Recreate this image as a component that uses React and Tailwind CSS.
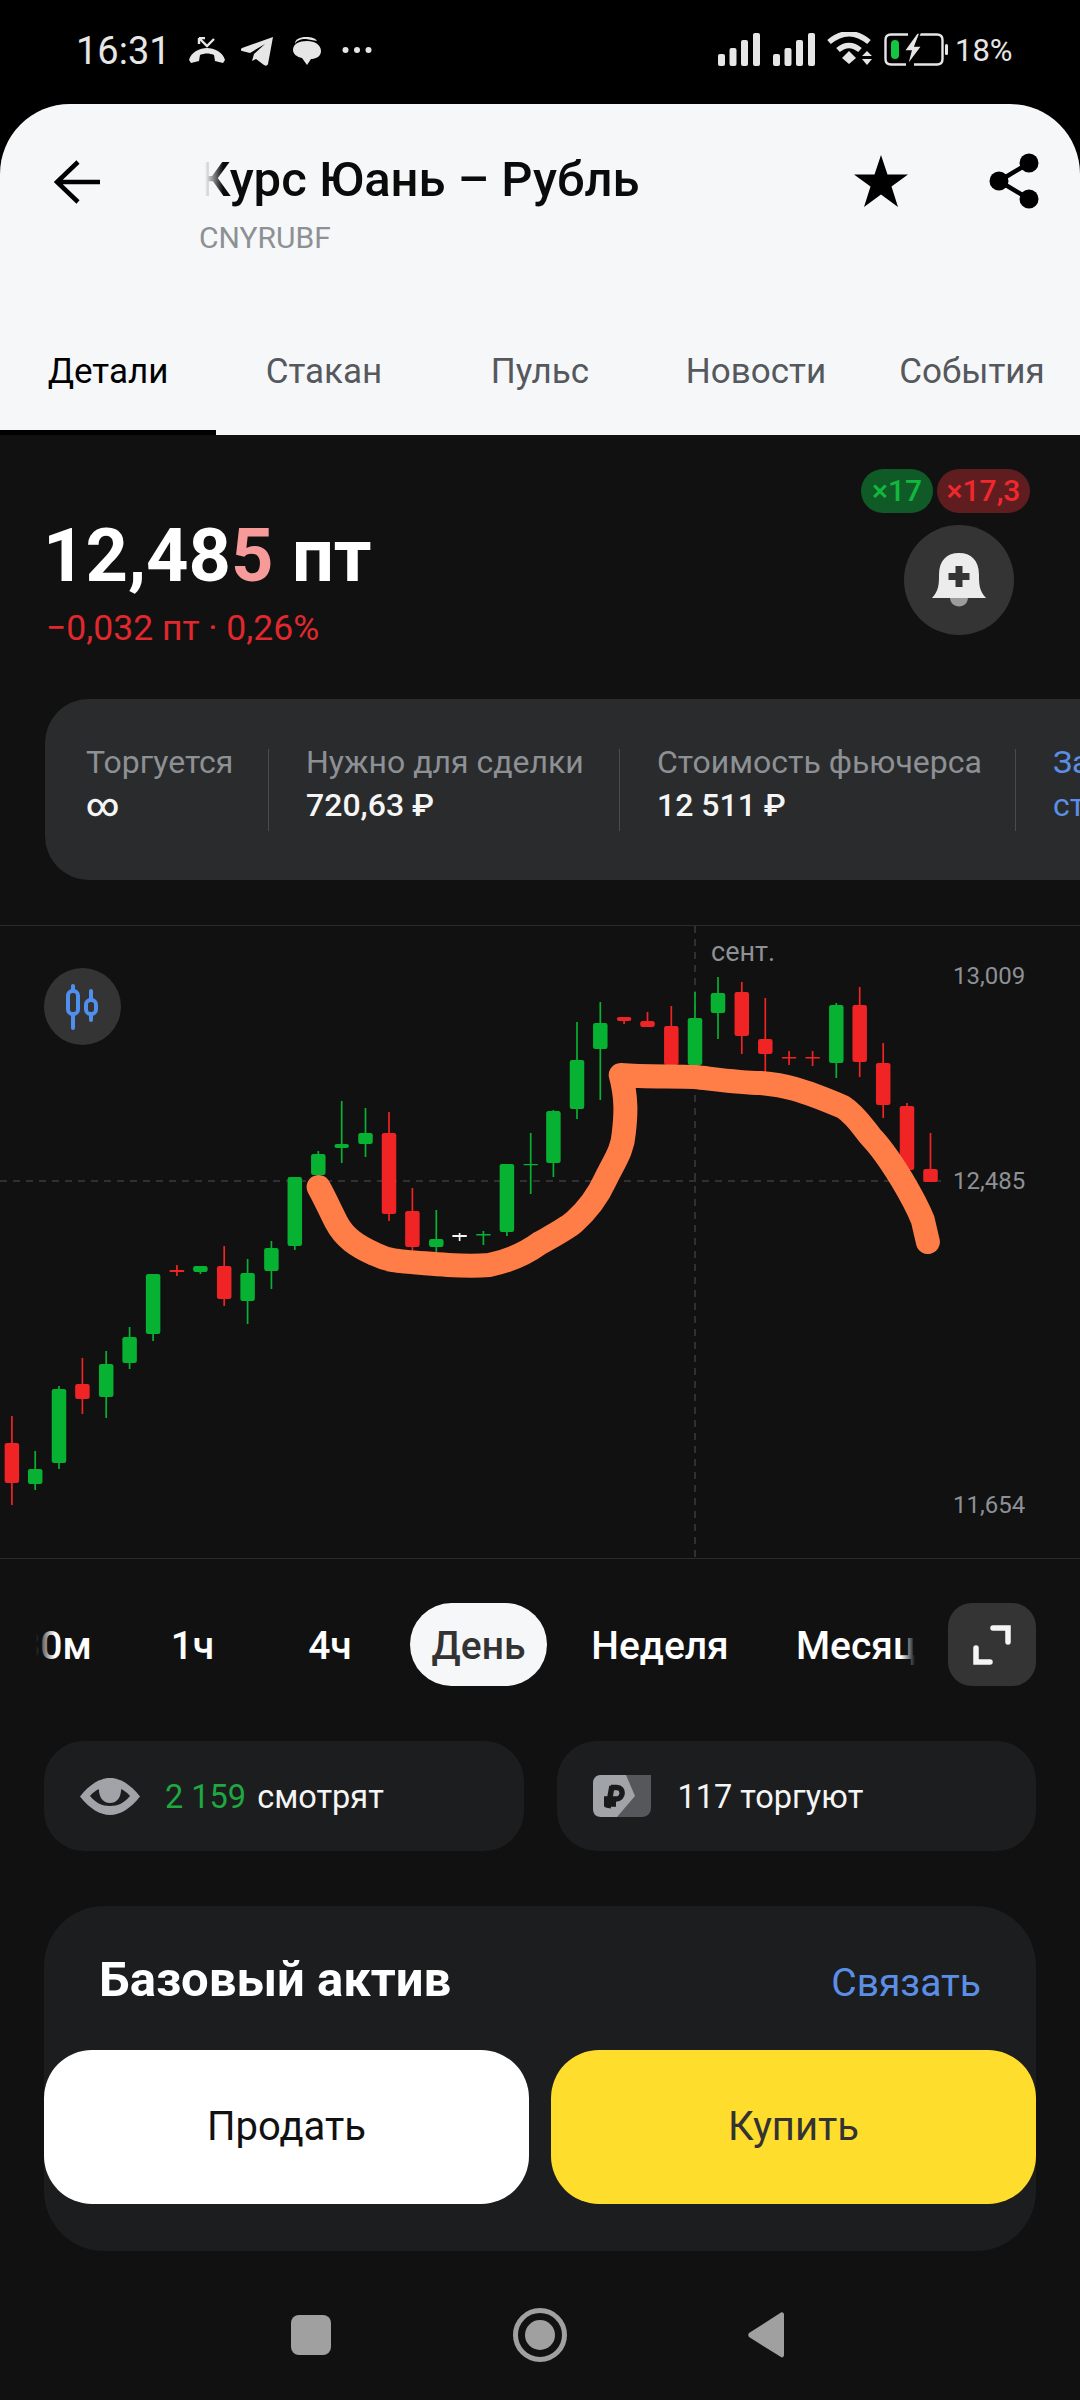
const FONT = { fontFamily: 'Roboto, "Noto Sans", sans-serif' };

const G = '#07b232';
const R = '#f02424';
const W = '#f5f5f5';
// x, wickTop, wickBottom, bodyTop, bodyBottom, colour
const candles = [
  [11.9, 1416, 1505, 1443, 1483, R],
  [35.2, 1451, 1490, 1469, 1484, G],
  [59, 1386, 1469, 1389, 1463, G],
  [82.4, 1358, 1414, 1384, 1399, R],
  [106.2, 1351, 1418, 1364, 1397, G],
  [129.6, 1327, 1369, 1337, 1363, G],
  [153.1, 1274, 1341, 1274, 1334, G],
  [176.9, 1265, 1276, 1270, 1272, R],
  [200.4, 1266, 1274, 1266, 1272, G],
  [224.2, 1246, 1306, 1266, 1299, R],
  [247.6, 1259, 1324, 1273, 1301, G],
  [271.4, 1241, 1289, 1248, 1271, G],
  [294.8, 1177, 1250, 1177, 1246, G],
  [318.3, 1151, 1177, 1154, 1175, G],
  [341.7, 1101, 1163, 1144, 1148, G],
  [365.5, 1108, 1157, 1133, 1144, G],
  [389, 1112, 1221, 1133, 1214, R],
  [412.4, 1188, 1253, 1211, 1247, R],
  [436.3, 1210, 1255, 1239, 1247, G],
  [459.6, 1233, 1241, 1235, 1237, W],
  [483.4, 1231, 1245, 1234, 1235.5, G],
  [506.9, 1164, 1236, 1164, 1232, G],
  [530.7, 1133, 1194, 1164, 1165, G],
  [553.4, 1110, 1177, 1111, 1163, G],
  [577, 1022, 1119, 1060, 1109, G],
  [600.3, 1002, 1100, 1023, 1049, G],
  [624.1, 1017, 1024, 1017, 1021, R],
  [647.5, 1012, 1027, 1021, 1027, R],
  [671.3, 1006, 1067, 1026, 1065, R],
  [695, 992, 1067, 1018, 1065, G],
  [718, 977, 1039, 993, 1013, G],
  [741.8, 982, 1054, 992, 1036, R],
  [765.3, 998, 1077, 1039, 1054, R],
  [789.1, 1051, 1065, 1057, 1058.5, R],
  [812.6, 1051, 1066, 1057, 1058.5, R],
  [836.3, 1003, 1078, 1005, 1063, G],
  [859.7, 987, 1077, 1005, 1062, R],
  [883.2, 1043, 1118, 1063, 1105, R],
  [907, 1103, 1170, 1106, 1170, R],
  [930.5, 1133, 1182, 1169, 1182, R],
];

const strokePath =
  'M318.6 1187 C324.8 1198 330 1210 336.2 1222 C344.5 1238 356.9 1246 374.5 1254 C391 1262 397.2 1261 447.9 1265 C465.5 1266 479 1266 489.3 1265 C509 1261 527.6 1252 540 1243 C552.4 1236 565.9 1229 574.1 1222 C589.7 1208 597.9 1196 605.2 1180 C614.5 1161 622.8 1150 623.8 1133 C625.9 1115 626.9 1098 620.7 1075 C643.5 1077 674.5 1076 695.2 1077 C721 1080 741.7 1083 760.4 1083 C783.1 1085 798.6 1088 843.1 1107 C855.5 1115 862.8 1127 871 1137 C884.5 1151 892.8 1165 902.1 1180 C910.4 1194 917.6 1207 922.8 1220 L927.9 1242';

function Chart() {
  return (
    <svg viewBox="0 926 1080 632" className="block h-full w-full">
      <line x1="695" y1="926" x2="695" y2="1558" stroke="#3a3b3c" strokeWidth="1.5" strokeDasharray="7 6" />
      <line x1="0" y1="1181" x2="941" y2="1181" stroke="#3a3b3c" strokeWidth="1.5" strokeDasharray="7 6" />
      {candles.map(([x, wt, wb, bt, bb, c], i) => {
        const thin = bb - bt < 3;
        return (
          <g key={i}>
            <line x1={x} y1={wt} x2={x} y2={wb} stroke={c} strokeWidth="1.7" />
            <rect x={x - 7.25} y={bt} width="14.5" height={Math.max(bb - bt, 1.2)} rx={thin ? 0.6 : 2.2} fill={c} />
          </g>
        );
      })}
      <path d={strokePath} fill="none" stroke="#ff7d47" strokeWidth="24" strokeLinecap="round" strokeLinejoin="round" />
    </svg>
  );
}

function StatusBar() {
  return (
    <div className="flex h-[104px] items-start bg-black pt-[31px] text-[#e6e6e6]">
      <span className="ml-[76px] text-[38px] leading-[40px]">16:31</span>
      <svg viewBox="0 0 36 27" className="ml-[18px] mt-[6px] h-[27px] w-[36px]" fill="#e6e6e6">
        <path d="M0 23 C2 15 11 11 18 11 C25 11 34 15 36 23 L34 26 L26 24 L25 18 C20 16 16 16 11 18 L10 24 L2 26 Z" />
        <path d="M10 1 H16 M10 1 V7 M10 1 L18 9 L25 2" fill="none" stroke="#e6e6e6" strokeWidth="2.4" />
      </svg>
      <svg viewBox="0 0 33 29" className="ml-[16px] mt-[6px] h-[29px] w-[33px]" fill="#e6e6e6">
        <path d="M32 0 L27 27 C26 29 25 29 23 28 L15 22 L11 24 L13 17 L24 7 L9 16 L1 14 C-1 13 0 12 1 11 Z" />
      </svg>
      <svg viewBox="0 0 28 28" className="ml-[19px] mt-[6px] h-[28px] w-[28px]" fill="#e6e6e6">
        <path d="M2 7 C2 2 7 0 13 0 C19 0 22 1 24 4 L13 2 C7 2 3 4 2 7Z" />
        <path d="M14 4 C22 4 28 8 28 14 C28 20 22 22 18 22 L14 28 L9 21 C4 20 0 17 0 13 C0 7 6 4 14 4Z" />
      </svg>
      <svg viewBox="0 0 30 8" className="ml-[21px] mt-[15px] h-[8px] w-[30px]" fill="#e6e6e6">
        <circle cx="3.5" cy="4" r="3" />
        <circle cx="15" cy="4" r="3" />
        <circle cx="26.5" cy="4" r="3" />
      </svg>
      <div className="flex-1" />
      <svg viewBox="0 0 42 33" className="mt-[2px] h-[33px] w-[42px]" fill="#e6e6e6">
        <rect x="0" y="21" width="7" height="12" rx="2" />
        <rect x="11.5" y="15" width="7" height="18" rx="2" />
        <rect x="23" y="7" width="7" height="26" rx="2" />
        <rect x="35" y="0" width="7" height="33" rx="2" />
      </svg>
      <svg viewBox="0 0 42 33" className="ml-[13px] mt-[2px] h-[33px] w-[42px]" fill="#e6e6e6">
        <rect x="0" y="21" width="7" height="12" rx="2" />
        <rect x="11.5" y="15" width="7" height="18" rx="2" />
        <rect x="23" y="7" width="7" height="26" rx="2" />
        <rect x="35" y="0" width="7" height="33" rx="2" />
      </svg>
      <svg viewBox="0 0 46 34" className="ml-[12px] mt-[1px] h-[34px] w-[46px]" fill="none" stroke="#e6e6e6">
        <path d="M2 10 C15 -1 29 -1 42 10" strokeWidth="5.5" />
        <path d="M11 18 C18 12 26 12 33 18" strokeWidth="5.5" />
        <path d="M15 26 L22 19 L29 26 L22 32 Z" fill="#e6e6e6" stroke="none" />
        <path d="M35 24 L40 19 L45 24 Z M35 27 L45 27 L40 33 Z" fill="#e6e6e6" stroke="none" />
      </svg>
      <svg viewBox="0 0 64 33" className="ml-[11px] mt-[2px] h-[33px] w-[64px]" fill="none">
        <path d="M24 1.5 H7 C3.5 1.5 1.5 3.5 1.5 7 V26 C1.5 29.5 3.5 31.5 7 31.5 H22 M34 1.5 H53 C56.5 1.5 58.5 3.5 58.5 7 V26 C58.5 29.5 56.5 31.5 53 31.5 H30" stroke="#e6e6e6" strokeWidth="2.4" />
        <rect x="61" y="11" width="3" height="11" rx="1.5" fill="#e6e6e6" />
        <rect x="7" y="7" width="8" height="19" rx="4" fill="#12c63f" />
        <path d="M33 0 L20 18 H27 L23 33 L38 13 H31 L36 0 Z" fill="#e6e6e6" stroke="#000" strokeWidth="1.5" />
      </svg>
      <span className="ml-[7px] w-[57px] text-[31px] leading-[40px]">18%</span>
      <div className="w-[68px]" />
    </div>
  );
}

function Header() {
  return (
    <div className="rounded-t-[70px] bg-[#f6f7f8]">
      <div className="flex h-[146px] items-start">
        <svg viewBox="0 0 46 44" className="ml-[54px] mt-[56px] h-[44px] w-[46px]" fill="none" stroke="#000" strokeWidth="4.5">
          <path d="M24 2 L3 22 L24 42 M3 22 H46" />
        </svg>
        <div className="relative ml-[99px] mt-[45px]">
          <div className="text-[49px] font-medium leading-[62px] text-[#0b0b0b]">Курс Юань – Рубль</div>
          <div className="mt-[10px] text-[30px] leading-[34px] text-[#8d9095]">CNYRUBF</div>
          <div className="absolute left-0 top-0 h-[62px] w-[24px] bg-gradient-to-r from-[#f6f7f8] from-25% to-transparent" />
        </div>
        <div className="flex-1" />
        <svg viewBox="0 0 54 52" className="mt-[51px] h-[52px] w-[54px]" fill="#000">
          <path d="M27 0 L33.5 19.5 H54 L37.5 31.5 L44 52 L27 39.5 L10 52 L16.5 31.5 L0 19.5 H20.5 Z" />
        </svg>
        <svg viewBox="0 0 50 56" className="ml-[81px] mr-[41px] mt-[49px] h-[56px] w-[50px]" fill="#000">
          <circle cx="40" cy="10" r="9.5" />
          <circle cx="10" cy="28" r="9.5" />
          <circle cx="40" cy="46" r="9.5" />
          <path d="M40 10 L10 28 L40 46" fill="none" stroke="#000" strokeWidth="4.5" />
        </svg>
      </div>
      <div className="flex h-[185px] text-[35px] text-[#55585d]">
        <div className="flex h-full w-[216px] items-start justify-center border-b-[5px] border-black pt-[100px] leading-[44px] text-black">Детали</div>
        <div className="flex h-full w-[216px] items-start justify-center pt-[100px] leading-[44px]">Стакан</div>
        <div className="flex h-full w-[216px] items-start justify-center pt-[100px] leading-[44px]">Пульс</div>
        <div className="flex h-full w-[216px] items-start justify-center pt-[100px] leading-[44px]">Новости</div>
        <div className="flex h-full w-[216px] items-start justify-center pt-[100px] leading-[44px]">События</div>
      </div>
    </div>
  );
}

function PriceRow() {
  return (
    <div className="flex justify-between pl-[46px] pr-[50px] pt-[34px]">
      <div className="pt-[47px]">
        <div className="-ml-[3px] text-[74px] font-bold leading-[80px] text-white">
          12,48<span className="text-[#f79a9a]">5</span> пт
        </div>
        <div className="mt-[12px] text-[35.5px] leading-[40px] text-[#e1282c]">−0,032 пт · 0,26%</div>
      </div>
      <div className="flex flex-col">
        <div className="flex gap-[4px] text-[30px] font-medium leading-[44px]">
          <div className="flex h-[44px] w-[72px] items-center justify-center rounded-full bg-[#0f5a27] text-[#12b83c]">×17</div>
          <div className="flex h-[44px] w-[93px] items-center justify-center rounded-full bg-[#5f1d20] text-[#f0282c]">×17,3</div>
        </div>
        <div className="ml-[43px] mt-[12px] flex h-[110px] w-[110px] items-center justify-center rounded-full bg-[#343435]">
          <svg viewBox="0 0 54 54" className="h-[54px] w-[54px]">
            <path d="M18 44 H36 C36 50 32 53.5 27 53.5 C22 53.5 18 50 18 44Z" fill="#9c9c9c" />
            <path d="M0 45 C7 38 7 30 7 22 C7 7 15 0 27 0 C39 0 47 7 47 22 C47 30 47 38 54 45 Z" fill="#ececec" />
            <path d="M23.5 13 H30.5 V20 H37.5 V27 H30.5 V34 H23.5 V27 H16.5 V20 H23.5 Z" fill="#343435" />
          </svg>
        </div>
      </div>
    </div>
  );
}

function InfoCard() {
  return (
    <div className="ml-[45px] mt-[51px] flex h-[181px] w-[1100px] items-center rounded-[44px] bg-[#2a2b2c] text-[32px] leading-[43px]">
      <div className="h-[82px] w-[224px] border-r border-[#4a4b4d] pl-[41px]">
        <div className="-mt-[8px] text-[#8d9095]">Торгуется</div>
        <div className="font-medium text-[#f5f5f5]">∞</div>
      </div>
      <div className="h-[82px] w-[351px] border-r border-[#4a4b4d] pl-[37px]">
        <div className="-mt-[8px] text-[#8d9095]">Нужно для сделки</div>
        <div className="font-medium text-[#f5f5f5]">720,63 ₽</div>
      </div>
      <div className="h-[82px] w-[396px] border-r border-[#4a4b4d] pl-[37px]">
        <div className="-mt-[8px] text-[#8d9095]">Стоимость фьючерса</div>
        <div className="font-medium text-[#f5f5f5]">12 511 ₽</div>
      </div>
      <div className="h-[82px] pl-[37px] text-[#5b8fe6]">
        <div className="-mt-[8px]">За</div>
        <div>ст</div>
      </div>
    </div>
  );
}

function ChartSection() {
  return (
    <div className="relative mt-[45px] h-[634px] border-y border-[#2a2b2c]">
      <Chart />
      <div className="absolute left-[44px] top-[42px] flex h-[77px] w-[77px] items-center justify-center rounded-full bg-[#343435]">
        <svg viewBox="0 0 34 46" className="h-[46px] w-[34px]" fill="none" stroke="#4f8fee" strokeWidth="4" strokeLinecap="round">
          <path d="M7 2 V7 M7 30 V44 M25 7 V16 M25 30 V36" />
          <rect x="2" y="7" width="10" height="23" rx="4.5" />
          <rect x="20" y="16" width="10" height="14" rx="4.5" />
        </svg>
      </div>
      <div className="absolute left-[711px] top-[9px] text-[27px] leading-[34px] text-[#8d9095]">сент.</div>
      <div className="absolute left-[953px] top-[35px] text-[24px] leading-[30px] text-[#8d9095]">13,009</div>
      <div className="absolute left-[953px] top-[240px] text-[24px] leading-[30px] text-[#8d9095]">12,485</div>
      <div className="absolute left-[953px] top-[564px] text-[24px] leading-[30px] text-[#8d9095]">11,654</div>
    </div>
  );
}

function TimeRow() {
  return (
    <div className="mt-[44px] flex h-[83px] text-[39px] font-medium text-white">
      <div className="relative ml-[31px] flex w-[884px] overflow-hidden">
        <div className="-ml-[42px] flex h-full w-[132px] shrink-0 items-center justify-center pt-[3px]">30м</div>
        <div className="ml-[3px] flex h-full w-[137px] shrink-0 items-center justify-center pt-[3px]">1ч</div>
        <div className="flex h-full w-[138px] shrink-0 items-center justify-center pt-[3px]">4ч</div>
        <div className="ml-[11px] flex h-full w-[137px] shrink-0 items-center justify-center rounded-full bg-[#f6f7f8] pt-[3px] text-[#333]">День</div>
        <div className="ml-[23px] flex h-full w-[180px] shrink-0 items-center justify-center pt-[3px]">Неделя</div>
        <div className="ml-[24px] flex h-full shrink-0 items-center pl-[22px] pt-[3px]">Месяц</div>
        <div className="absolute left-0 top-0 h-full w-[24px] bg-gradient-to-r from-[#111112] from-20% to-transparent" />
        <div className="absolute right-0 top-0 h-full w-[14px] bg-gradient-to-l from-[#111112] to-transparent" />
      </div>
      <div className="ml-[33px] flex h-[83px] w-[88px] items-center justify-center rounded-[24px] bg-[#343435]">
        <svg viewBox="0 0 40 40" className="h-[40px] w-[40px]" fill="none" stroke="#f5f5f5" strokeWidth="5.5" strokeLinecap="round">
          <path d="M21 3 H36 V17 M4 23 V37 H18" />
        </svg>
      </div>
    </div>
  );
}

function Stats() {
  return (
    <div className="mx-[44px] mt-[55px] grid grid-cols-2 gap-[33px] text-[32.5px] text-[#f5f5f5]">
      <div className="flex h-[110px] items-center rounded-[40px] bg-[#1c1d1f] pl-[36px]">
        <svg viewBox="0 0 60 37" className="h-[37px] w-[60px]">
          <path d="M0 18.5 C10 6 20 0 30 0 C40 0 50 6 60 18.5 C50 31 40 37 30 37 C20 37 10 31 0 18.5Z" fill="#a0a3a8" />
          <path d="M10 18 C16 11 22 9 30 9 C38 9 44 11 50 18 C44 25 38 28 30 28 C22 28 16 25 10 18Z" fill="#1c1d1f" />
          <path d="M19 8 C24 4 36 4 41 8 C42 19 37 25 30 25 C23 25 18 19 19 8Z" fill="#a0a3a8" />
        </svg>
        <span className="ml-[25px] pt-[3px] text-[#1fa83f]">2 159</span>
        <span className="ml-[11px] pt-[3px]">смотрят</span>
      </div>
      <div className="flex h-[110px] items-center rounded-[40px] bg-[#1c1d1f] pl-[36px]">
        <svg viewBox="0 0 58 42" className="h-[42px] w-[58px]">
          <path d="M20 0 H58 V33 C58 38 54 42 49 42 H20 Z" fill="#55575b" />
          <path d="M8 0 H33 L42 21 L24 42 H8 C3 42 0 39 0 34 V8 C0 3 3 0 8 0Z" fill="#a0a3a8" />
          <path d="M11 29 H23 M19 11 L15 33 M18 12.5 H24 C31 12.5 31 24 23 24 H11" fill="none" stroke="#18191b" strokeWidth="5.5" />
        </svg>
        <span className="ml-[27px] pt-[3px]">117 торгуют</span>
      </div>
    </div>
  );
}

function AssetCard() {
  return (
    <div className="mx-[44px] mt-[55px] h-[345px] rounded-[60px] bg-[#1c1d1f]">
      <div className="flex h-[144px] items-start justify-between pl-[55px] pr-[55px] pt-[47px]">
        <div className="text-[49px] font-bold leading-[54px] text-white">Базовый актив</div>
        <div className="mt-[3px] text-[39px] leading-[54px] text-[#5b8fe6]">Связать</div>
      </div>
      <div className="flex gap-[22px] text-[40px]">
        <div className="flex h-[154px] flex-1 items-center justify-center rounded-[48px] bg-white text-[#111]">Продать</div>
        <div className="flex h-[154px] flex-1 items-center justify-center rounded-[48px] bg-[#ffdd2d] text-[#333]">Купить</div>
      </div>
    </div>
  );
}

function NavBar() {
  return (
    <div className="mt-[57px] flex h-[88px] items-start">
      <div className="ml-[291px] mt-[7px] h-[40px] w-[40px] rounded-[8px] bg-[#a0a0a0]" />
      <svg viewBox="0 0 54 54" className="ml-[182px] h-[54px] w-[54px]" fill="none">
        <circle cx="27" cy="27" r="24.5" stroke="#a0a0a0" strokeWidth="5" />
        <circle cx="27" cy="27" r="15" fill="#a0a0a0" />
      </svg>
      <svg viewBox="0 0 36 46" className="ml-[181px] mt-[4px] h-[46px] w-[36px]" fill="#a0a0a0">
        <path d="M33 0.5 C35 0 36 1 36 3 V43 C36 45 34 46 33 45 L1 25 C0 24 0 22 1 21 Z" />
      </svg>
    </div>
  );
}

export default function App() {
  return (
    <div className="h-[2400px] w-[1080px] overflow-hidden bg-black" style={FONT}>
      <StatusBar />
      <Header />
      <div className="h-[1965px] overflow-hidden bg-[#111112]">
        <PriceRow />
        <InfoCard />
        <ChartSection />
        <TimeRow />
        <Stats />
        <AssetCard />
        <NavBar />
      </div>
    </div>
  );
}
